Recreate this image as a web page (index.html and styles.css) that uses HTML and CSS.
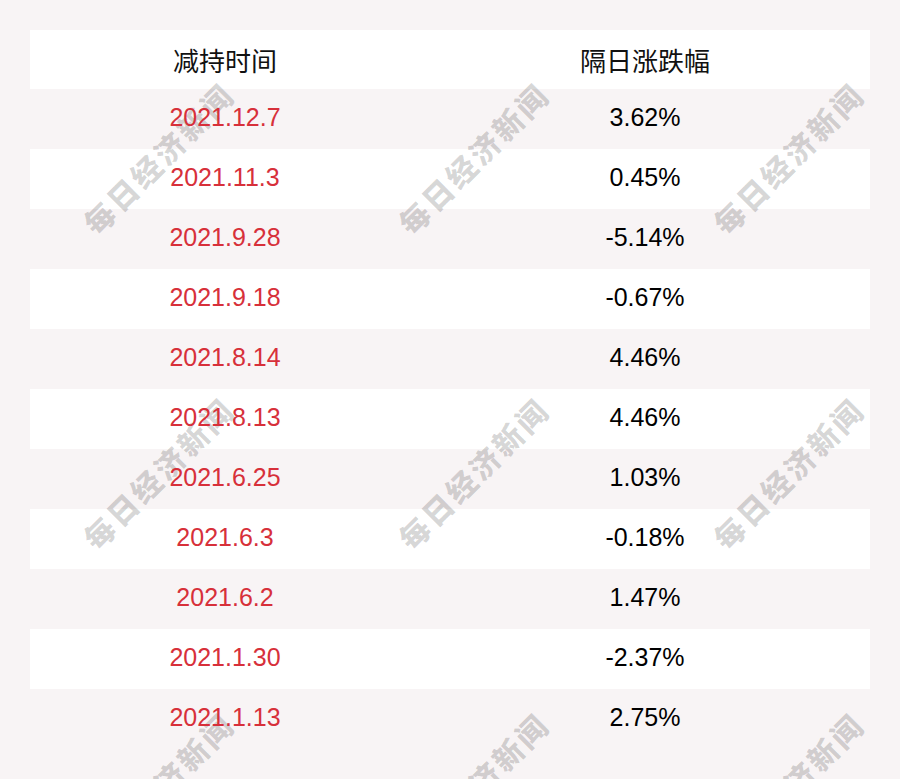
FILE: index.html
```html
<!DOCTYPE html>
<html lang="zh-CN">
<head>
<meta charset="utf-8">
<title>减持时间 隔日涨跌幅</title>
<link rel="stylesheet" href="styles.css">
</head>
<body>
<div class="page">
  <div class="table">
    <div class="row head"><div class="cell"><span class="txt">减持时间</span></div><div class="cell"><span class="txt">隔日涨跌幅</span></div></div>
    <div class="row odd"><div class="cell date"><span class="txt">2021.12.7</span></div><div class="cell"><span class="txt">3.62%</span></div></div>
    <div class="row even"><div class="cell date"><span class="txt">2021.11.3</span></div><div class="cell"><span class="txt">0.45%</span></div></div>
    <div class="row odd"><div class="cell date"><span class="txt">2021.9.28</span></div><div class="cell"><span class="txt">-5.14%</span></div></div>
    <div class="row even"><div class="cell date"><span class="txt">2021.9.18</span></div><div class="cell"><span class="txt">-0.67%</span></div></div>
    <div class="row odd"><div class="cell date"><span class="txt">2021.8.14</span></div><div class="cell"><span class="txt">4.46%</span></div></div>
    <div class="row even"><div class="cell date"><span class="txt">2021.8.13</span></div><div class="cell"><span class="txt">4.46%</span></div></div>
    <div class="row odd"><div class="cell date"><span class="txt">2021.6.25</span></div><div class="cell"><span class="txt">1.03%</span></div></div>
    <div class="row even"><div class="cell date"><span class="txt">2021.6.3</span></div><div class="cell"><span class="txt">-0.18%</span></div></div>
    <div class="row odd"><div class="cell date"><span class="txt">2021.6.2</span></div><div class="cell"><span class="txt">1.47%</span></div></div>
    <div class="row even"><div class="cell date"><span class="txt">2021.1.30</span></div><div class="cell"><span class="txt">-2.37%</span></div></div>
    <div class="row odd"><div class="cell date"><span class="txt">2021.1.13</span></div><div class="cell"><span class="txt">2.75%</span></div></div>
  </div>
  <div class="watermarks" aria-hidden="true">
    <div class="wm"><span>每日经济新闻</span></div>
    <div class="wm"><span>每日经济新闻</span></div>
    <div class="wm"><span>每日经济新闻</span></div>
    <div class="wm"><span>每日经济新闻</span></div>
    <div class="wm"><span>每日经济新闻</span></div>
    <div class="wm"><span>每日经济新闻</span></div>
    <div class="wm"><span>每日经济新闻</span></div>
    <div class="wm"><span>每日经济新闻</span></div>
    <div class="wm"><span>每日经济新闻</span></div>
  </div>
</div>
</body>
</html>
```
FILE: styles.css
```css
html, body {
  margin: 0;
  padding: 0;
  background: #f8f4f5;
}
.page {
  position: relative;
  width: 900px;
  height: 779px;
  overflow: hidden;
  padding: 30px;
  box-sizing: border-box;
  font-family: "Liberation Sans", "Noto Sans CJK SC", sans-serif;
}
.table {
  display: flex;
  flex-direction: column;
}
.row {
  display: grid;
  grid-template-columns: 1fr 1fr;
  height: 60px;
}
.row.head {
  height: 59px;
  background: #ffffff;
}
.row.even {
  background: #ffffff;
}
.row.odd {
  background: transparent;
}
.cell {
  display: flex;
  align-items: center;
  justify-content: center;
  padding-right: 30px;
  font-size: 25px;
  color: #000000;
  line-height: 1;
}
.head .cell {
  font-family: "Noto Sans CJK SC", sans-serif;
  font-size: 26px;
  font-weight: 400;
  color: #111111;
}
.cell.date {
  color: #d7303a;
}
.txt {
  position: relative;
  z-index: 2;
  margin-top: -3px;
}
.head .txt {
  margin-top: 0;
}
.watermarks {
  position: absolute;
  left: 0;
  top: 0;
  z-index: 1;
  display: grid;
  grid-template-columns: repeat(3, 315px);
  grid-template-rows: repeat(3, 315px);
  pointer-events: none;
}
.wm {
  display: flex;
  align-items: center;
  justify-content: center;
}
.wm span {
  display: block;
  transform: rotate(-45deg);
  font-family: "Noto Sans CJK SC", sans-serif;
  font-weight: 900;
  font-size: 30px;
  letter-spacing: 3px;
  white-space: nowrap;
  color: rgba(0, 0, 0, 0.16);
}
```
